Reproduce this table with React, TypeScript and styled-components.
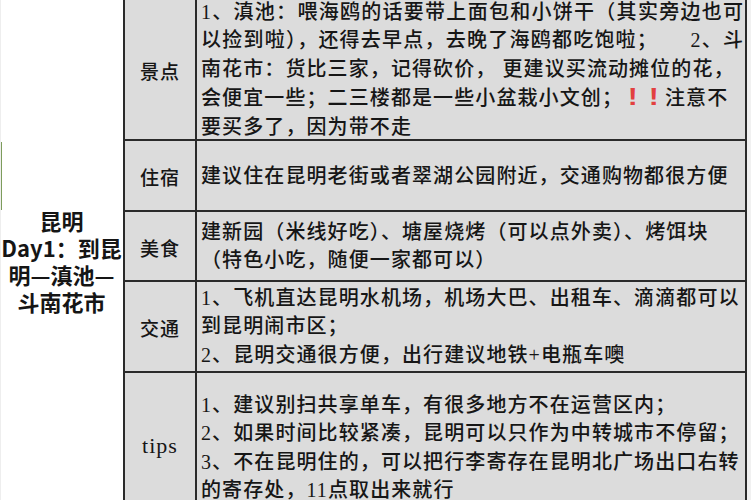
import React from "react";
import styled, { createGlobalStyle } from "styled-components";

const Global = createGlobalStyle`
  html, body { margin: 0; padding: 0; background: #ffffff; overflow: hidden; }
  #root { width: 751px; height: 500px; overflow: hidden; }
`;

const Page = styled.div`
  display: flex;
  width: 751px;
  height: 520px;
  background: #f1f1f1;
`;

const SideTitle = styled.div`
  position: relative;
  flex: none;
  width: 123px;
  height: 520px;
  background: #ffffff;
  display: flex;
  align-items: center;
  justify-content: center;
  &::before {
    content: "";
    position: absolute;
    left: 0;
    top: 142px;
    width: 2px;
    height: 68px;
    background: #7d9c5c;
  }
  &::after {
    content: "";
    position: absolute;
    left: 0;
    top: 0;
    width: 1px;
    height: 520px;
    background: #eeeeee;
  }
`;

const TitleText = styled.div`
  font-family: "Noto Sans CJK SC", "Noto Sans", sans-serif;
  font-weight: 700;
  font-size: 22px;
  line-height: 27px;
  color: #151515;
  text-align: center;
  white-space: pre;
  margin-top: 2px;
`;

const Table = styled.div`
  flex: none;
  display: grid;
  grid-template-columns: 72px 548px;
  grid-template-rows: 141px 71px 70px 91px 147px;
  border-left: 2px solid #2a2a2a;
  border-right: 2px solid #2a2a2a;
  background: #dcdcdc;
  color: #161616;
`;

const Label = styled.div`
  display: flex;
  align-items: center;
  justify-content: center;
  border-right: 2px solid #2a2a2a;
  border-bottom: 2px solid #2a2a2a;
  font-family: "Liberation Serif", "Noto Sans CJK SC", serif;
  font-size: ${(p: { $latin?: boolean }) => (p.$latin ? "22px" : "19px")};
  font-weight: 500;
  letter-spacing: 1px;
  padding-top: ${(p: { $latin?: boolean }) => (p.$latin ? "0" : "2px")};
`;

const Content = styled.div<{ $pad?: number }>`
  display: flex;
  flex-direction: column;
  justify-content: center;
  border-bottom: 2px solid #2a2a2a;
  padding: ${(p) => p.$pad ?? 0}px 2px 0 4px;
  font-family: "Liberation Serif", "Noto Sans CJK SC", serif;
  font-size: 20px;
  font-weight: 500;
  line-height: 28.5px;
`;

const Line = styled.div<{ $justify?: boolean; $indent?: number }>`
  letter-spacing: ${(p) => (p.$justify ? "0" : "1.1px")};
  text-align: ${(p) => (p.$justify ? "justify" : "left")};
  text-align-last: ${(p) => (p.$justify ? "justify" : "auto")};
  white-space: ${(p) => (p.$justify ? "normal" : "nowrap")};
  padding-left: ${(p) => p.$indent ?? 0}px;
`;

const Bang = styled.span`
  display: inline-block;
  width: 21px;
  text-align: center;
  color: #e2403f;
  font-family: "Liberation Sans", sans-serif;
  font-weight: 900;
  font-size: 24px;
  transform: scaleX(1.25);
`;

export default function App() {
  return (
    <>
      <Global />
      <Page>
        <SideTitle>
          <TitleText>{"昆明\nDay1：到昆\n明—滇池—\n斗南花市"}</TitleText>
        </SideTitle>
        <Table>
          <Label>景点</Label>
          <Content>
            <Line $justify>1、滇池：喂海鸥的话要带上面包和小饼干（其实旁边也可</Line>
            <Line $justify>以捡到啦），还得去早点，去晚了海鸥都吃饱啦；　　2、斗</Line>
            <Line>南花市：货比三家，记得砍价，&nbsp;更建议买流动摊位的花，</Line>
            <Line>
              会便宜一些；二三楼都是一些小盆栽小文创；<Bang>!</Bang>
              <Bang>!</Bang>注意不
            </Line>
            <Line>要买多了，因为带不走</Line>
          </Content>

          <Label>住宿</Label>
          <Content $pad={2}>
            <Line>建议住在昆明老街或者翠湖公园附近，交通购物都很方便</Line>
          </Content>

          <Label>美食</Label>
          <Content>
            <Line>建新园（米线好吃）、塘屋烧烤（可以点外卖）、烤饵块</Line>
            <Line>（特色小吃，随便一家都可以）</Line>
          </Content>

          <Label>交通</Label>
          <Content>
            <Line>1、飞机直达昆明水机场，机场大巴、出租车、滴滴都可以</Line>
            <Line>到昆明闹市区；</Line>
            <Line>2、昆明交通很方便，出行建议地铁+电瓶车噢</Line>
          </Content>

          <Label $latin>tips</Label>
          <Content $pad={4}>
            <Line>1、建议别扫共享单车，有很多地方不在运营区内；</Line>
            <Line>2、如果时间比较紧凑，昆明可以只作为中转城市不停留；</Line>
            <Line>3、不在昆明住的，可以把行李寄存在昆明北广场出口右转</Line>
            <Line>的寄存处，11点取出来就行</Line>
          </Content>
        </Table>
      </Page>
    </>
  );
}
